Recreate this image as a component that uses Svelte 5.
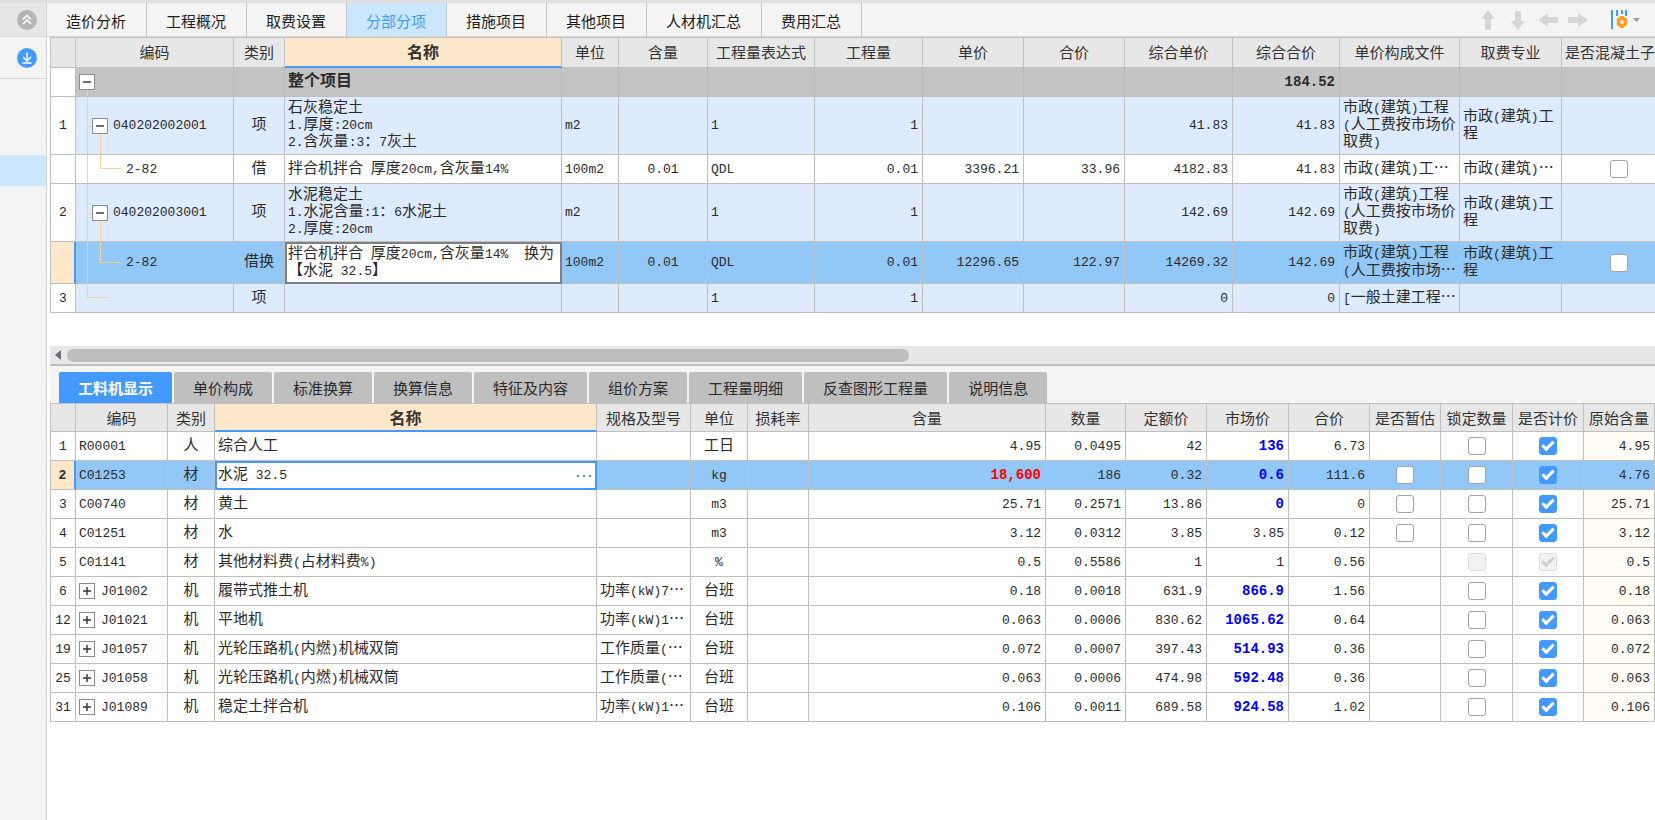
<script lang="ts">
	type Align = 'l' | 'c' | 'r';

	const pages = ['造价分析', '工程概况', '取费设置', '分部分项', '措施项目', '其他项目', '人材机汇总', '费用汇总'];
	const details = [
		'工料机显示',
		'单价构成',
		'标准换算',
		'换算信息',
		'特征及内容',
		'组价方案',
		'工程量明细',
		'反查图形工程量',
		'说明信息'
	];

	let page = $state('分部分项');
	let detail = $state('工料机显示');

	const itemHeads = [
		'单位',
		'含量',
		'工程量表达式',
		'工程量',
		'单价',
		'合价',
		'综合单价',
		'综合合价',
		'单价构成文件',
		'取费专业'
	];
	const itemAligns: Align[] = ['l', 'c', 'l', 'r', 'r', 'r', 'r', 'r', 'l', 'l'];

	const fileFull = '市政(建筑)工程\n(人工费按市场价\n取费)';
	const major = '市政(建筑)工\n程';

	const items = [
		{
			no: '1',
			kind: 'item',
			code: '040202002001',
			type: '项',
			name: '石灰稳定土\n1.厚度:20cm\n2.含灰量:3：7灰土',
			cells: ['m2', '', '1', '1', '', '', '41.83', '41.83', fileFull, major]
		},
		{
			no: '',
			kind: 'sub',
			code: '2-82',
			type: '借',
			name: '拌合机拌合 厚度20cm,含灰量14%',
			cells: ['100m2', '0.01', 'QDL', '0.01', '3396.21', '33.96', '4182.83', '41.83', '市政(建筑)工…', '市政(建筑)…']
		},
		{
			no: '2',
			kind: 'item',
			code: '040202003001',
			type: '项',
			name: '水泥稳定土\n1.水泥含量:1：6水泥土\n2.厚度:20cm',
			cells: ['m2', '', '1', '1', '', '', '142.69', '142.69', fileFull, major]
		},
		{
			no: '',
			kind: 'sub',
			selected: true,
			code: '2-82',
			type: '借换',
			name: '拌合机拌合 厚度20cm,含灰量14%  换为\n【水泥 32.5】',
			cells: [
				'100m2',
				'0.01',
				'QDL',
				'0.01',
				'12296.65',
				'122.97',
				'14269.32',
				'142.69',
				'市政(建筑)工程\n(人工费按市场…',
				major
			]
		},
		{
			no: '3',
			kind: 'last',
			code: '',
			type: '项',
			name: '',
			cells: ['', '', '1', '1', '', '', '0', '0', '[一般土建工程…', '']
		}
	];

	// est: null = no box in that cell
	const materials = [
		{ no: '1', code: 'R00001', type: '人', name: '综合人工', spec: '', unit: '工日', qty: '4.95', num: '0.0495', quota: '42', market: '136', changed: true, total: '6.73', est: null, orig: '4.95' },
		{ no: '2', code: 'C01253', type: '材', name: '水泥 32.5', spec: '', unit: 'kg', qty: '18,600', num: '186', quota: '0.32', market: '0.6', changed: true, total: '111.6', est: false, orig: '4.76', selected: true },
		{ no: '3', code: 'C00740', type: '材', name: '黄土', spec: '', unit: 'm3', qty: '25.71', num: '0.2571', quota: '13.86', market: '0', changed: true, total: '0', est: false, orig: '25.71' },
		{ no: '4', code: 'C01251', type: '材', name: '水', spec: '', unit: 'm3', qty: '3.12', num: '0.0312', quota: '3.85', market: '3.85', total: '0.12', est: false, orig: '3.12' },
		{ no: '5', code: 'C01141', type: '材', name: '其他材料费(占材料费%)', spec: '', unit: '%', qty: '0.5', num: '0.5586', quota: '1', market: '1', total: '0.56', est: null, orig: '0.5', disabled: true },
		{ no: '6', code: 'J01002', type: '机', name: '履带式推土机', spec: '功率(kW)7…', unit: '台班', qty: '0.18', num: '0.0018', quota: '631.9', market: '866.9', changed: true, total: '1.56', est: null, orig: '0.18', group: true },
		{ no: '12', code: 'J01021', type: '机', name: '平地机', spec: '功率(kW)1…', unit: '台班', qty: '0.063', num: '0.0006', quota: '830.62', market: '1065.62', changed: true, total: '0.64', est: null, orig: '0.063', group: true },
		{ no: '19', code: 'J01057', type: '机', name: '光轮压路机(内燃)机械双筒', spec: '工作质量(…', unit: '台班', qty: '0.072', num: '0.0007', quota: '397.43', market: '514.93', changed: true, total: '0.36', est: null, orig: '0.072', group: true },
		{ no: '25', code: 'J01058', type: '机', name: '光轮压路机(内燃)机械双筒', spec: '工作质量(…', unit: '台班', qty: '0.063', num: '0.0006', quota: '474.98', market: '592.48', changed: true, total: '0.36', est: null, orig: '0.063', group: true },
		{ no: '31', code: 'J01089', type: '机', name: '稳定土拌合机', spec: '功率(kW)1…', unit: '台班', qty: '0.106', num: '0.0011', quota: '689.58', market: '924.58', changed: true, total: '1.02', est: null, orig: '0.106', group: true }
	];

	// odd entries are latin runs or an ellipsis
	const runs = (text: string) => text.split(/([ -~]+|…)/);
</script>

{#snippet mixed(text: string)}{#each text.split('\n') as line}<div>{#each runs(line) as run, i}{#if i % 2}<span class={run === '…' ? 'dots' : 'latin'}>{run}</span>{:else}{run}{/if}{/each}</div>{/each}{/snippet}

{#snippet toggle(open: boolean)}
	<button class="toggle" aria-label={open ? '折叠' : '展开'}>
		<svg viewBox="0 0 16 16" width="16" height="16">
			<path d={open ? 'M4 8h8' : 'M4 8h8M8 4v8'} />
		</svg>
	</button>
{/snippet}

<div class="app">
	<div class="strip"></div>
	<div class="body">
		<aside class="side">
			<button class="side-top" aria-label="收起">
				<svg viewBox="0 0 20 20" width="20" height="20">
					<circle cx="10" cy="10" r="10" fill="#b4b4b4" />
					<path d="M6 9.500l4-4 4 4M6 14l4-4 4 4" fill="none" stroke="#fff" stroke-width="1.6" />
				</svg>
			</button>
			<button class="side-down" aria-label="下载">
				<svg viewBox="0 0 20 20" width="20" height="20">
					<circle cx="10" cy="10" r="10" fill="#4499ff" />
					<path d="M10 4.500v8M6 9l4 4 4-4M5.500 15h9" fill="none" stroke="#fff" stroke-width="1.5" />
				</svg>
			</button>
			<div class="side-current"></div>
		</aside>

		<main class="main">
			<header class="bar">
				<nav class="pages">
					{#each pages as p}
						<button class:active={p === page} onclick={() => (page = p)}>{p}</button>
					{/each}
				</nav>
				<div class="tools">
					<button aria-label="上移">
						<svg viewBox="0 0 20 20" width="20" height="20"><path d="M10 0l7 9h-4v11H7V9H3z" /></svg>
					</button>
					<button aria-label="下移">
						<svg viewBox="0 0 20 20" width="20" height="20"><path d="M10 20l7-9h-4V1H7v10H3z" /></svg>
					</button>
					<button aria-label="左移">
						<svg viewBox="0 0 20 20" width="20" height="20"><path d="M0 10l10-7v4h10v6H10v4z" /></svg>
					</button>
					<button aria-label="右移">
						<svg viewBox="0 0 20 20" width="20" height="20"><path d="M20 10l-10-7v4H0v6h10v4z" /></svg>
					</button>
					<button class="setup" aria-label="列设置">
						<svg viewBox="0 0 30 20" width="30" height="20">
							<path d="M1 0h2v19H1z" fill="#4499ff" />
							<path d="M6 0h2v6H6zM11 0h2v4h-2zM15 0h2v6h-2z" fill="#4499ff" />
							<path
								d="M10.4 6h3.2l.6 1.6 1.7-.2 1.6 2.8-1 1.8 1 1.8-1.6 2.8-1.7-.2-.6 1.6h-3.2l-.6-1.6-1.7.2-1.6-2.8 1-1.8-1-1.8 1.6-2.8 1.7.2zM12 10a2 2 0 100 4 2 2 0 000-4z"
								fill="#ff9c1f"
								fill-rule="evenodd"
							/>
							<path d="M23 8h7l-3.500 4z" fill="#9a9a9a" />
						</svg>
					</button>
				</div>
			</header>

			<section class="upper">
				<table class="grid items">
					<colgroup>
						{#each [26, 158, 51, 277, 57, 89, 107, 108, 101, 101, 108, 107, 120, 102, 114] as w}
							<col style="width: {w}px" />
						{/each}
					</colgroup>
					<thead>
						<tr>
							<th></th>
							<th>编码</th>
							<th>类别</th>
							<th class="current">名称</th>
							{#each itemHeads as h}
								<th>{h}</th>
							{/each}
							<th class="l">是否混凝土子</th>
						</tr>
					</thead>
					<tbody>
						<tr class="total">
							<td class="no"></td>
							<td class="code">
								<span class="trunk from-box"></span>
								<div class="node">{@render toggle(true)}</div>
							</td>
							<td></td>
							<td class="l">整个项目</td>
							<td></td><td></td><td></td><td></td><td></td><td></td><td></td>
							<td class="r"><span class="latin">184.52</span></td>
							<td></td><td></td><td></td>
						</tr>
						{#each items as row}
							<tr class={row.kind} class:selected={row.selected}>
								<td class="no">{row.no}</td>
								<td class="code">
									<span class="trunk"></span>
									{#if row.kind === 'item'}
										<span class="stub"></span>
										<span class="branch from-box"></span>
									{:else if row.kind === 'sub'}
										<span class="branch"></span>
									{/if}
									<div class="node">
										{#if row.kind === 'item'}{@render toggle(true)}{/if}
										<span class="latin">{row.code}</span>
									</div>
								</td>
								<td class="c">{row.type}</td>
								<td class="l name">{@render mixed(row.name)}</td>
								{#each row.cells as cell, i}
									<td class={itemAligns[i]}>{@render mixed(cell)}</td>
								{/each}
								<td class="c">
									{#if row.kind === 'sub'}
										<input type="checkbox" aria-label="是否混凝土子" />
									{/if}
								</td>
							</tr>
						{/each}
					</tbody>
				</table>
			</section>

			<div class="scroll">
				<svg viewBox="0 0 6 10" width="6" height="10"><path d="M6 0v10L0 5z" fill="#6b6b76" /></svg>
				<div class="track"><div class="thumb"></div></div>
			</div>

			<nav class="details">
				{#each details as d}
					<button class:active={d === detail} onclick={() => (detail = d)}>{d}</button>
				{/each}
			</nav>

			<section class="lower">
				<table class="grid materials">
					<colgroup>
						<col style="width: 26px" />
						<col style="width: 92px" />
						<col style="width: 47px" />
						<col />
						{#each [94, 57, 61, 237, 80, 81, 82, 81, 71, 72, 71, 71] as w}
							<col style="width: {w}px" />
						{/each}
					</colgroup>
					<thead>
						<tr>
							<th></th>
							<th>编码</th>
							<th>类别</th>
							<th class="current">名称</th>
							{#each ['规格及型号', '单位', '损耗率', '含量', '数量', '定额价', '市场价', '合价', '是否暂估', '锁定数量', '是否计价', '原始含量'] as h}
								<th>{h}</th>
							{/each}
						</tr>
					</thead>
					<tbody>
						{#each materials as m}
							<tr class:selected={m.selected}>
								<td class="no">{m.no}</td>
								<td class="l code">
									<div class="node">
										{#if m.group}{@render toggle(false)}{/if}
										<span class="latin">{m.code}</span>
									</div>
								</td>
								<td class="c">{m.type}</td>
								<td class="l name">
									{#if m.selected}
										<div class="editing">
											{@render mixed(m.name)}
											<button class="more" aria-label="更多">
												<svg viewBox="0 0 14 4" width="14" height="4">
													<path d="M0 1h2v2H0zM6 1h2v2H6zM12 1h2v2h-2z" fill="#3d93dd" />
												</svg>
											</button>
										</div>
									{:else}
										{@render mixed(m.name)}
									{/if}
								</td>
								<td class="l">{@render mixed(m.spec)}</td>
								<td class="c">{@render mixed(m.unit)}</td>
								<td></td>
								<td class="r" class:over={m.selected}>{@render mixed(m.qty)}</td>
								<td class="r">{@render mixed(m.num)}</td>
								<td class="r">{@render mixed(m.quota)}</td>
								<td class="r" class:changed={m.changed}>{@render mixed(m.market)}</td>
								<td class="r">{@render mixed(m.total)}</td>
								<td class="c">
									{#if m.est !== null}<input type="checkbox" aria-label="是否暂估" />{/if}
								</td>
								<td class="c"><input type="checkbox" aria-label="锁定数量" disabled={m.disabled} /></td>
								<td class="c"><input type="checkbox" aria-label="是否计价" checked disabled={m.disabled} /></td>
								<td class="r orig">{@render mixed(m.orig)}</td>
							</tr>
						{/each}
					</tbody>
				</table>
			</section>
		</main>
	</div>
</div>

<style>
	:global(body) {
		margin: 0;
		background: #fff;
	}

	.app {
		--line: #bfbfbf;
		--blue: #4499ff;
		--guide: #fdcf94;
		--peach: #ffe7ca;

		min-height: 100vh;
		display: flex;
		flex-direction: column;
		overflow: hidden;
		font: 15px/17px 'Noto Sans CJK SC', sans-serif;
		color: #2b2b2b;
	}

	button {
		margin: 0;
		padding: 0;
		border: 0;
		background: none;
		font: inherit;
		color: inherit;
	}

	svg {
		display: block;
	}

	.strip {
		height: 3px;
		background: #e0e0e0;
	}

	.body {
		flex: 1;
		display: flex;
	}

	/* left rail */

	.side {
		flex: none;
		box-sizing: border-box;
		width: 47px;
		background: #f4f4f4;
		border-right: 1px solid #d4d4d4;
		display: flex;
		flex-direction: column;
	}

	.side button {
		box-sizing: border-box;
		padding-left: 17px;
		display: flex;
		align-items: center;
		border-bottom: 1px solid #d8d8d8;
	}

	.side .side-top {
		height: 34px;
		background: #e6e6e6;
	}

	.side .side-down {
		height: 42px;
	}

	.side-current {
		height: 31px;
		margin-top: 76px;
		background: #cbe7ff;
	}

	.main {
		flex: 1;
		min-width: 0;
		display: flex;
		flex-direction: column;
	}

	/* page tabs */

	.bar {
		display: flex;
		justify-content: space-between;
		height: 33px;
		background: #f4f4f4;
		border-bottom: 1px solid #d8d8d8;
	}

	.pages {
		display: flex;
	}

	.pages button {
		padding: 2px 20px 0 19px;
		border-right: 1px solid #c4c4c4;
		color: #1c1c1c;
	}

	.pages .active {
		background: #cbe7ff;
		color: var(--blue);
	}

	.tools {
		display: flex;
		align-items: center;
		gap: 10px;
		padding-right: 15px;
		fill: #d6d6d6;
	}

	.setup {
		margin-left: 12px;
	}

	/* grids */

	.upper {
		overflow: hidden;
		padding: 0 0 33px 3px;
	}

	.lower {
		flex: 1;
		padding-left: 3px;
	}

	.grid {
		table-layout: fixed;
		border-collapse: separate;
		border-spacing: 0;
	}

	.items {
		width: 1626px;
	}

	.materials {
		width: 100%;
	}

	th,
	td {
		box-sizing: border-box;
		height: 29px;
		padding: 0;
		border-right: 1px solid var(--line);
		border-bottom: 1px solid var(--line);
		white-space: pre;
		overflow: hidden;
	}

	th {
		border-top: 1px solid var(--line);
		background: #e7e7e7;
		font-weight: 400;
		color: #333;
	}

	td {
		font-family: 'Liberation Mono', 'Noto Sans CJK SC', monospace;
	}

	.items th {
		height: 31px;
		padding-bottom: 2px;
	}

	th:first-child,
	td:first-child {
		border-left: 1px solid var(--line);
	}

	th.current {
		background: var(--peach);
		border-bottom: 2px solid var(--blue);
		font-size: 16px;
		font-weight: 700;
	}

	.l {
		text-align: left;
		padding-left: 3px;
	}

	.c {
		text-align: center;
	}

	.r {
		text-align: right;
		padding-right: 4px;
	}

	.latin,
	.no {
		font-size: 13px;
		line-height: 13px;
	}

	.dots {
		font-family: 'Noto Sans CJK SC', sans-serif;
		line-height: 13px;
	}

	.no {
		text-align: center;
		background: #fff;
	}

	.item td {
		height: 58px;
	}

	.item td:not(.no),
	.last td:not(.no) {
		background: #deeafe;
	}

	.total td:not(.no) {
		background: #c4c4c4;
		border-right-color: #bababa;
	}

	.total {
		font-size: 16px;
		font-weight: 700;
	}

	.total .latin,
	.over .latin,
	.changed .latin {
		font-size: 14px;
		font-weight: 700;
	}

	.over {
		color: #f00;
	}

	.changed {
		color: #00f;
	}

	.orig {
		background: #fffbf5;
	}

	.selected td {
		background: #92c8f7;
	}

	.items .selected td {
		height: 42px;
	}

	.selected td.no {
		background: var(--peach);
		border-right: 2px solid var(--blue);
		font-weight: 700;
	}

	.selected td.name {
		background: #fff;
		border: 2px solid var(--blue);
		padding-left: 1px;
	}

	.items .selected td.name {
		border-color: #7f7f7f;
	}

	.editing {
		display: flex;
		align-items: center;
		justify-content: space-between;
		padding-right: 4px;
	}

	/* tree */

	.code {
		position: relative;
		white-space: nowrap;
	}

	.node {
		display: flex;
		align-items: center;
		gap: 6px;
	}

	.total .node {
		padding-left: 3px;
	}

	.item .node {
		padding-left: 16px;
		gap: 5px;
	}

	.sub .node {
		padding-left: 50px;
	}

	.toggle {
		position: relative;
		box-sizing: border-box;
		width: 16px;
		height: 16px;
		border: 1px solid #8c8c8c;
		background: #fff;
		display: grid;
		place-content: center;
	}

	.toggle path {
		fill: none;
		stroke: #333;
		stroke-width: 1.4;
	}

	.trunk,
	.branch,
	.stub {
		position: absolute;
		box-sizing: border-box;
	}

	.trunk {
		top: -1px;
		bottom: -1px;
		left: 11px;
		border-left: 1px solid var(--guide);
	}

	.trunk.from-box {
		top: 50%;
	}

	.last .trunk {
		bottom: 50%;
		width: 21px;
		border-bottom: 1px solid var(--guide);
	}

	.stub {
		top: 50%;
		left: 11px;
		width: 8px;
		border-top: 1px solid var(--guide);
	}

	.branch {
		top: -1px;
		bottom: 50%;
		left: 24px;
		width: 21px;
		border-left: 1px solid var(--guide);
		border-bottom: 1px solid var(--guide);
	}

	.branch.from-box {
		top: 50%;
		bottom: -1px;
		border-bottom: 0;
	}

	/* check boxes */

	input {
		appearance: none;
		box-sizing: border-box;
		width: 18px;
		height: 18px;
		margin: 0;
		border: 1px solid #a3a3a3;
		border-radius: 3px;
		background: #fff;
		display: inline-grid;
		place-content: center;
		vertical-align: middle;
	}

	input:checked {
		border-color: var(--blue);
		background: var(--blue);
	}

	input:checked::before {
		content: '';
		box-sizing: border-box;
		width: 12px;
		height: 7px;
		border-left: 3px solid #fff;
		border-bottom: 3px solid #fff;
		transform: translateY(-2px) rotate(-45deg);
	}

	input:disabled {
		border-color: #dcdcdc;
		background: #f2f2f2;
	}

	input:disabled::before {
		border-color: #cfcfcf;
	}

	/* scroll bar */

	.scroll {
		display: flex;
		align-items: center;
		gap: 6px;
		height: 18px;
		margin-left: 3px;
		padding-left: 5px;
		background: #e7e7e7;
		border-bottom: 2px solid #bdbdbd;
	}

	.track {
		flex: 1;
	}

	.thumb {
		width: 53%;
		height: 13px;
		border-radius: 7px;
		background: #bdbdbd;
	}

	/* detail tabs */

	.details {
		display: flex;
		gap: 2px;
		margin-left: 3px;
		padding: 6px 9px 0;
		background: #f4f4f4;
	}

	.details button {
		height: 31px;
		padding: 0 19px;
		border-radius: 2px 2px 0 0;
		background: #bfbfbf;
	}

	.details .active {
		background: var(--blue);
		color: #fff;
		font-weight: 700;
	}
</style>
